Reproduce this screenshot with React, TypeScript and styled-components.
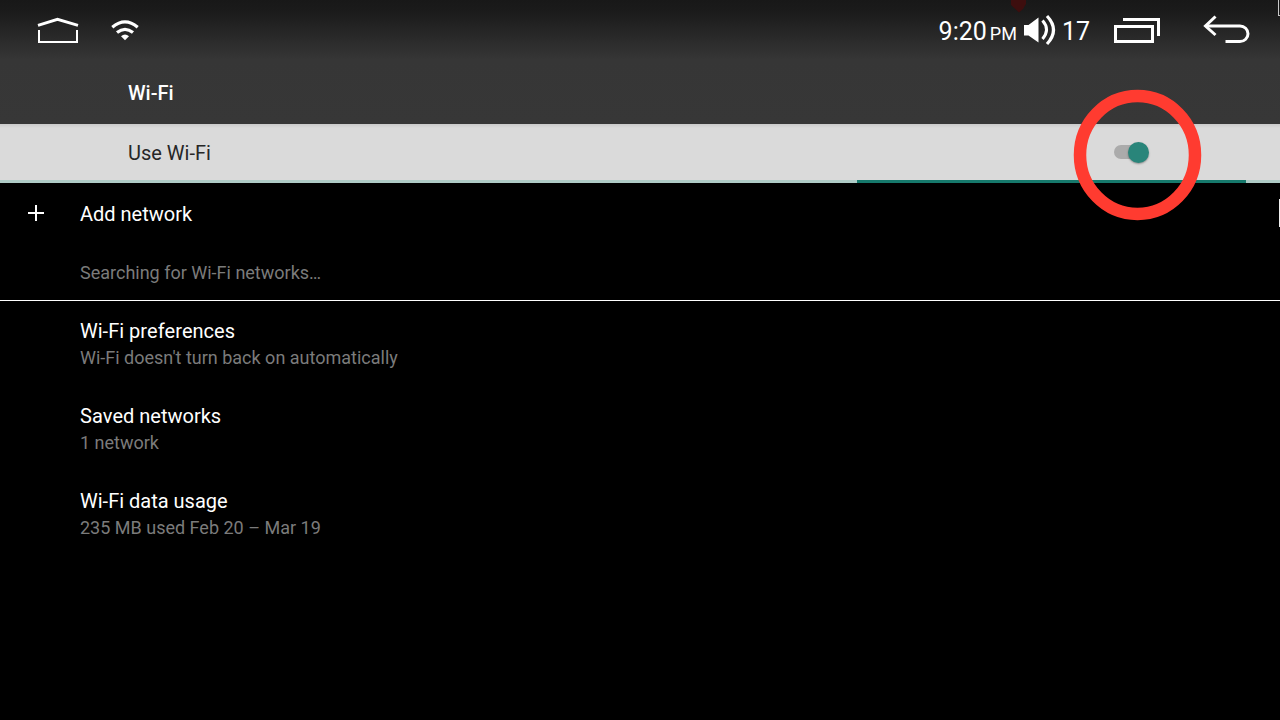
import React, { useState } from "react";
import styled, { createGlobalStyle } from "styled-components";

const GlobalStyle = createGlobalStyle`
  * { box-sizing: border-box; }
  body {
    margin: 0;
    background: #000;
    color: #fff;
    font-family: Roboto, "Liberation Sans", sans-serif;
  }
  button {
    border: 0;
    padding: 0;
    background: none;
    color: inherit;
    font: inherit;
    text-align: left;
    cursor: pointer;
  }
`;

const Screen = styled.div`
  position: relative;
  min-height: 100vh;
  overflow: hidden;
  background: #000;
`;

const Header = styled.header`
  background: linear-gradient(#181818 0, #1b1b1b 12px, #363636 60px, #373737 100%);
`;

const StatusBar = styled.div`
  display: flex;
  align-items: center;
  justify-content: space-between;
  height: 60px;
  padding: 0 29px 0 36px;
`;

const StatusGroup = styled.div`
  display: flex;
  align-items: center;
`;

const IconButton = styled.button<{ $gap?: number }>`
  display: flex;
  margin-left: ${(p) => p.$gap ?? 0}px;
`;

const Icon = styled.svg`
  display: block;
  flex: none;
`;

const WifiStatus = styled(Icon)`
  margin-left: 29px;
`;

const StatusText = styled.span`
  padding-top: 4px;
  font-size: 25px;
  line-height: 30px;
`;

const Meridiem = styled.span`
  font-size: 18px;
  line-height: 20px;
  margin-left: 3px;
`;

const VolumeIcon = styled(Icon)`
  margin: 0 6px 0 5px;
`;

const Title = styled.h1`
  margin: 0;
  padding: 19px 128px 17px;
  font-size: 20px;
  line-height: 28px;
  font-weight: 500;
`;

const SwitchBar = styled.label`
  display: flex;
  align-items: center;
  justify-content: space-between;
  height: 56px;
  padding: 2px 128px 0;
  background: linear-gradient(#cacaca 0, #dadada 4px);
  color: #262626;
  font-size: 20px;
  line-height: 28px;
`;

const SwitchHolder = styled.span`
  position: relative;
  display: flex;
  align-items: flex-start;
  width: 38px;
  height: 22px;
`;

const Switch = styled.input`
  appearance: none;
  position: relative;
  width: 32px;
  height: 14px;
  margin: 3px 0 0;
  border-radius: 7px;
  background: #ababab;
  cursor: pointer;

  &::after {
    content: "";
    position: absolute;
    top: -3px;
    left: -4px;
    width: 21px;
    height: 21px;
    border-radius: 50%;
    background: #f1f1f1;
    box-shadow: 0 1px 2px rgba(0, 0, 0, 0.35);
  }
  &:checked::after {
    left: 14px;
    background: #29857a;
  }
`;

const Highlight = styled.svg`
  position: absolute;
  z-index: 1;
  top: -53px;
  left: -42px;
  pointer-events: none;
`;

const Progress = styled.div`
  display: grid;
  grid-template-columns: 857fr 389fr 34fr;
  height: 3px;
  background: #afcbc6;
`;

const ProgressFill = styled.div`
  grid-column: 2;
  background: #16796c;
`;

const AddRow = styled.button`
  display: flex;
  align-items: center;
  gap: 36px;
  width: 100%;
  height: 62px;
  padding-left: 28px;
`;

const Label = styled.span`
  display: block;
  font-size: 20px;
  line-height: 28px;
  font-kerning: none;
`;

const Summary = styled.span`
  display: block;
  font-size: 18px;
  line-height: 26px;
  color: #7b7b7b;
`;

const Searching = styled.div`
  padding: 15px 80px 14px;
  border-bottom: 1px solid #fff;
`;

const Row = styled.button`
  display: block;
  width: 100%;
  padding: 16px 80px 15px;
`;

const TopMark = styled.svg`
  position: absolute;
  top: 0;
  left: 79%;
`;

const EdgeBox = styled.div`
  position: absolute;
  top: 0;
  right: 0;
  width: 2px;
  height: 16px;
  border: solid #c8c8c8;
  border-width: 0 0 1px 1px;
`;

const EdgeBar = styled.div`
  position: absolute;
  top: 199px;
  right: 0;
  width: 1px;
  height: 28px;
  background: #eee;
`;

const preferences = [
  { label: "Wi-Fi preferences", summary: "Wi-Fi doesn't turn back on automatically" },
  { label: "Saved networks", summary: "1 network" },
  { label: "Wi-Fi data usage", summary: "235 MB used Feb 20 – Mar 19" },
];

export default function App() {
  const [enabled, setEnabled] = useState(true);

  return (
    <Screen>
      <GlobalStyle />
      <Header>
        <StatusBar>
          <StatusGroup>
            <IconButton aria-label="Home">
              <Icon width="44" height="28" viewBox="0 0 44 28" fill="none" stroke="#fff">
                <path d="M2 9.4 21.5 3.3 42 9.4" strokeWidth="2.8" />
                <path d="M3 14v12h38V14" strokeWidth="2" />
              </Icon>
            </IconButton>
            <WifiStatus width="32" height="24" viewBox="0 0 32 24" fill="none" stroke="#fff">
              <path d="M3.3 9.2Q16 -1.4 28.7 9.2" strokeWidth="3.2" />
              <path d="M8 14.6Q16 8 24 14.6" strokeWidth="3.2" />
              <path d="M12 18.2Q16 15 20 18.2L16 22.3Z" fill="#fff" stroke="none" />
            </WifiStatus>
          </StatusGroup>
          <StatusGroup>
            <StatusText as="time">
              9:20<Meridiem>PM</Meridiem>
            </StatusText>
            <VolumeIcon width="34" height="32" viewBox="0 0 34 32" fill="none" stroke="#fff">
              <path d="M2 11H6.5L16.5 3.5V28.5L6.5 21.5H2Z" fill="#fff" stroke="none" />
              <path d="M20.5 6.5Q28.5 15.5 20.5 25" strokeWidth="3" />
              <path d="M25 2Q38 16 25 30" strokeWidth="3.2" />
            </VolumeIcon>
            <StatusText>17</StatusText>
            <IconButton aria-label="Recent apps" $gap={22}>
              <Icon width="48" height="28" viewBox="0 0 48 28" fill="none" stroke="#fff" strokeWidth="3">
                <path d="M3.5 10.5h37v15h-37z" />
                <path d="M11 3.5h35.5V20" />
              </Icon>
            </IconButton>
            <IconButton aria-label="Back" $gap={41}>
              <Icon width="50" height="32" viewBox="0 0 50 32" fill="none" stroke="#fff" strokeWidth="3">
                <path d="M14.5 2.5 4.5 12 14.5 21" />
                <path d="M5 12H39A8 7.75 0 0 1 39 27.5H24.5" />
              </Icon>
            </IconButton>
          </StatusGroup>
        </StatusBar>
        <Title>Wi-Fi</Title>
      </Header>
      <main>
        <SwitchBar>
          Use Wi-Fi
          <SwitchHolder>
            <Switch
              type="checkbox"
              role="switch"
              checked={enabled}
              onChange={(e) => setEnabled(e.target.checked)}
            />
            <Highlight width="130" height="132" viewBox="0 0 130 132" aria-hidden="true">
              <ellipse cx="65.5" cy="66" rx="57.5" ry="59" fill="none" stroke="#ff3b30" strokeWidth="12.5" />
            </Highlight>
          </SwitchHolder>
        </SwitchBar>
        <Progress>
          <ProgressFill />
        </Progress>
        <AddRow>
          <Icon width="16" height="18" viewBox="0 0 16 18" stroke="#fff" strokeWidth="2">
            <path d="M8 0v16M0 8h16" />
          </Icon>
          <Label>Add network</Label>
        </AddRow>
        <Searching>
          <Summary>Searching for Wi-Fi networks…</Summary>
        </Searching>
        {preferences.map((p) => (
          <Row key={p.label}>
            <Label>{p.label}</Label>
            <Summary>{p.summary}</Summary>
          </Row>
        ))}
      </main>
      <TopMark width="18" height="14" viewBox="0 0 18 14" aria-hidden="true">
        <path d="M-4 0 1 6 8 12.5 12 9 15 4V0Z" fill="#3d0e0e" />
      </TopMark>
      <EdgeBox />
      <EdgeBar />
    </Screen>
  );
}
